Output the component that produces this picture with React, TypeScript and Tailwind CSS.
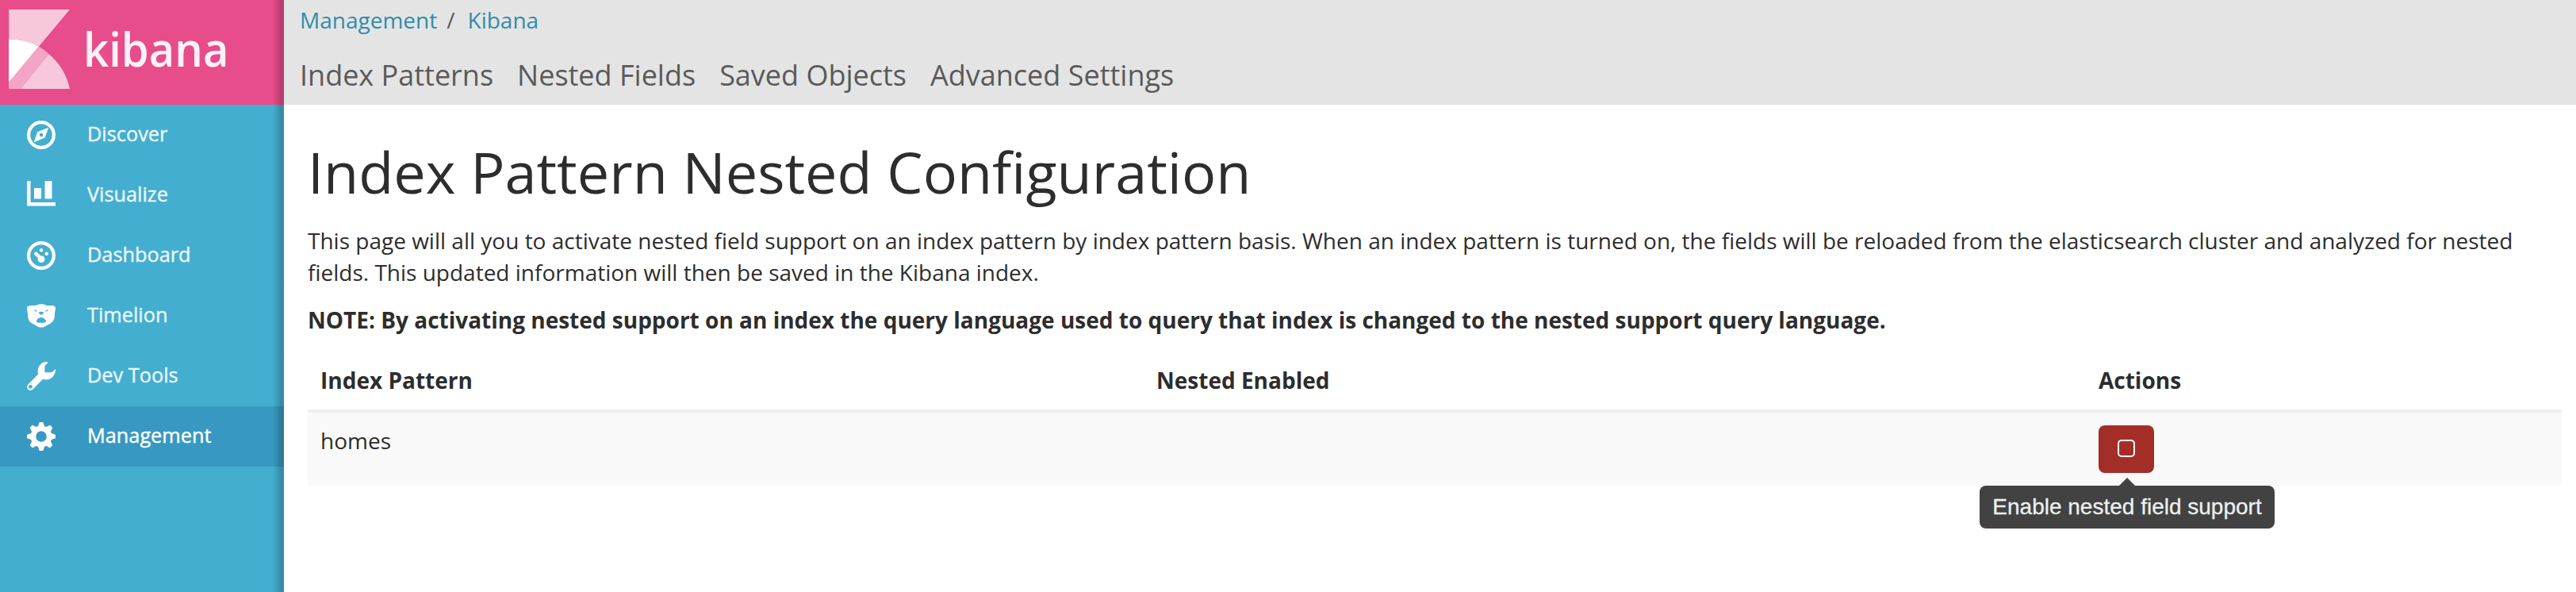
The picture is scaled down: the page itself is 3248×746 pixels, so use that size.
import React from "react";

const Discover = () => (
  <svg className="size-9 shrink-0" viewBox="0 0 36 36" fill="#fff">
    <circle cx="18" cy="18" r="15.9" fill="none" stroke="#fff" strokeWidth="4.2" />
    <path fillRule="evenodd" d="M27.2 8.8 22.6 21.6 8.8 27.2 13.2 14.2ZM18 15.7a2.3 2.3 0 1 0 0 4.6 2.3 2.3 0 0 0 0-4.6Z" />
  </svg>
);

const Visualize = () => (
  <svg className="size-9 shrink-0" viewBox="0 0 36 36" fill="#fff">
    <path d="M0 0h4.5v27H36v4.5H0ZM9 9h9v13.500H9ZM22.500 0h9v22.500h-9Z" />
  </svg>
);

const Dashboard = () => (
  <svg className="size-9 shrink-0" viewBox="0 0 36 36" fill="#fff">
    <circle cx="18" cy="18" r="15.9" fill="none" stroke="#fff" strokeWidth="4.2" />
    <circle cx="18" cy="11.200" r="2.200" />
    <circle cx="24.700" cy="15.700" r="2.300" />
    <circle cx="18" cy="22.600" r="4.400" />
    <path d="M11.200 15.700 18 22" stroke="#fff" strokeWidth="4.400" strokeLinecap="round" />
  </svg>
);

const Timelion = () => (
  <svg className="size-9 shrink-0" viewBox="0 0 36 36" fill="#fff">
    <path
      fillRule="evenodd"
      d="M2 5.500C4.500 4.800 8 4.900 11 5 13.200 3.900 15.500 3.300 18 3.300S22.800 3.900 25 5C28 4.900 31.500 4.800 34 5.500 36.200 6.300 36.200 8.500 35.800 10.500 35.500 12 35 13.500 35 15 35.200 19.500 34.500 24 31 26.500 28.500 28.800 25.500 29.500 23 31.300 21 32.600 19.500 32.600 18 32.600S15 32.600 13 31.300C10.500 29.500 7.500 28.800 5 26.500 1.500 24 .8 19.500 1 15 1 13.500.5 12 .2 10.500-.2 8.500-.2 6.300 2 5.500ZM9 10.200C9.800 12 11.200 12.900 13 12.300 12.500 11.200 11 10.600 9 10.200ZM27 10.200C25 10.600 23.500 11.200 23 12.300 24.800 12.900 26.200 12 27 10.200ZM15 13.500C14.800 15.200 16.500 16.600 18 16.700 19.500 16.600 21.200 15.200 21 13.500 19.500 12.500 16.500 12.500 15 13.500ZM12 24.500C12 26.800 13.500 26.700 18 26.700S24 26.800 24 24.500C23.800 22 20 20 18 20S12.200 22 12 24.500Z"
    />
  </svg>
);

const Wrench = () => (
  <svg className="size-9 shrink-0" viewBox="0 0 36 36" fill="#fff">
    <path
      fillRule="evenodd"
      d="M26.900.8 22.400 5V13.200H31.300L36 8.900C36.300 15.500 32 21.200 26.500 22.300 24 22.700 21.800 22.300 20 21.700L7.600 34.600C5.800 36.400 3.200 36.400 1.500 34.800-.3 33.100-.4 30.300 1.300 28.500L14.200 15.600C12.300 8.500 16 1.800 21.500.4 23.500-.1 25.400 0 26.900.8ZM4.400 28.900a2.400 2.400 0 1 0 0 4.800 2.400 2.400 0 0 0 0-4.800Z"
    />
  </svg>
);

const Gear = () => (
  <svg className="size-9 shrink-0" viewBox="0 0 36 36" fill="#fff">
    <circle cx="18" cy="18" r="10" fill="none" stroke="#fff" strokeWidth="6.400" />
    {[0, 45, 90, 135, 180, 225, 270, 315].map((a) => (
      <path key={a} transform={`rotate(${a} 18 18)`} d="M16.300 0h3.400q.7 0 .9.700L21.800 4.500l2 2.500H12.200l2-2.500L15.400.7q.2-.7.900-.7Z" />
    ))}
  </svg>
);

const nav = [
  { label: "Discover", Icon: Discover },
  { label: "Visualize", Icon: Visualize },
  { label: "Dashboard", Icon: Dashboard },
  { label: "Timelion", Icon: Timelion },
  { label: "Dev Tools", Icon: Wrench },
  { label: "Management", Icon: Gear, active: true },
];

const KibanaMark = () => (
  <svg className="h-[100px] w-[77px] shrink-0" viewBox="11 12 77 100">
    <path d="M11 12H88L49 58.600A78.700 78.700 0 0 0 11 49.500Z" fill="#f7c8dc" />
    <path d="M11 49.500A78.700 78.700 0 0 1 49 58.600L11 104Z" fill="#fff" />
    <path d="M49 58.600A78.700 78.700 0 0 1 61.500 68L26 112H11V104Z" fill="#f3a5c5" />
    <path d="M61.500 68A78.700 78.700 0 0 1 88 112H26Z" fill="#f7c8dc" />
    <path d="M11 12h1v37h-1Z" fill="#f3a5c5" />
  </svg>
);

export default function App() {
  return (
    <div className="flex h-[746px] w-full overflow-hidden bg-white font-['Open_Sans','Noto_Sans',sans-serif] text-[28px] leading-[40px] text-[#2d2d2d]">
      <aside className="relative w-[358px] shrink-0 bg-[#44aed1]">
        <div className="flex h-[132px] items-start bg-[#e74c8b] pt-3 pl-[11px]">
          <KibanaMark />
          <span className="mt-[14px] ml-[17px] origin-left scale-x-[.935] font-['Open_Sans',sans-serif] text-[60px] leading-[70px] font-semibold whitespace-nowrap text-[#fdf1f6]">
            kibana
          </span>
        </div>
        <nav>
          {nav.map(({ label, Icon, active }) => (
            <a
              key={label}
              className={
                active
                  ? "flex h-[76px] items-center bg-[#3799c1] pl-[34px] text-white"
                  : "flex h-[76px] items-center pl-[34px] text-[#ecf7fa]"
              }
            >
              <Icon />
              <span className="mb-[5px] ml-10 text-[25.3px] leading-[36px] [-webkit-text-stroke:0.4px_currentColor]">
                {label}
              </span>
            </a>
          ))}
        </nav>
        <div className="absolute inset-y-0 right-0 w-[14px] bg-linear-to-r from-transparent to-black/20 to-75%" />
      </aside>

      <div className="min-w-0 flex-1">
        <header className="h-[132px] bg-[#e4e4e4] pt-[5px] pl-5">
          <div className="flex h-10">
            <a className="text-[#328caa]">Management</a>
            <span className="mr-4 ml-3 text-[#5a5a5a]">/</span>
            <a className="text-[#328caa]">Kibana</a>
          </div>
          <div className="mt-[25px] flex gap-[30px] text-[36px] leading-[50px] text-[#5a5a5a]">
            <a>Index Patterns</a>
            <a>Nested Fields</a>
            <a>Saved Objects</a>
            <a>Advanced Settings</a>
          </div>
        </header>

        <main className="pt-11 pr-[18px] pl-[30px]">
          <h1 className="text-[72px] leading-[80px]">Index Pattern Nested Configuration</h1>
          <p className="mt-[27px]">
            This page will all you to activate nested field support on an index pattern by index pattern basis. When an
            index pattern is turned on, the fields will be reloaded from the elasticsearch cluster and analyzed for nested
            fields. This updated information will then be saved in the Kibana index.
          </p>
          <p className="mt-5 font-bold">
            NOTE: By activating nested support on an index the query language used to query that index is changed to the
            nested support query language.
          </p>
          <div className="mt-5 grid h-[77px] grid-cols-[1054px_1188px_1fr] border-b-4 border-[#ebeff0] pt-4 pl-4 font-bold">
            <div>Index Pattern</div>
            <div>Nested Enabled</div>
            <div>Actions</div>
          </div>
          <div className="grid h-[92px] grid-cols-[1054px_1188px_1fr] bg-[#f9f9f9] pt-[15px] pl-4">
            <div>homes</div>
            <div />
            <div className="relative pt-px">
              <button className="flex h-[60px] w-[70px] items-center justify-center rounded-lg bg-[#a32e27]">
                <span className="mb-0.5 size-[22px] rounded-[5px] border-2 border-white" />
              </button>
              <div className="absolute top-[67px] -left-[150px] flex w-[372px] flex-col items-center">
                <svg className="h-[10px] w-5" viewBox="0 0 20 10">
                  <path d="M0 10 10 0 20 10Z" fill="#424242" />
                </svg>
                <div className="h-[54px] w-full rounded-lg bg-[#424242] text-center font-['Liberation_Sans',Arial,sans-serif] text-[28px] leading-[54px] whitespace-nowrap text-[#ecf0f1] [-webkit-text-stroke:0.3px_currentColor]">
                  Enable nested field support
                </div>
              </div>
            </div>
          </div>
        </main>
      </div>
    </div>
  );
}
